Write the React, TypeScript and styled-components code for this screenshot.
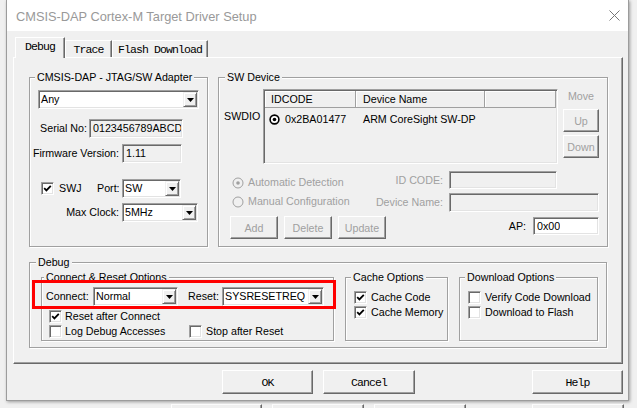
import React from 'react';
import styled, { createGlobalStyle } from 'styled-components';

const MONO = `"Liberation Mono", "DejaVu Sans Mono", monospace`;

const GlobalStyle = createGlobalStyle`
  html, body {
    margin: 0;
    padding: 0;
    background: #f0f0f0;
  }
  body {
    font-family: "Liberation Sans", Arial, sans-serif;
    font-size: 10.7px;
    color: #000;
  }
  * {
    box-sizing: border-box;
  }
`;

const Page = styled.div`
  width: 637px;
  height: 408px;
  overflow: hidden;
  background: #f0f0f0;
`;

const Dialog = styled.div`
  position: relative;
  z-index: 1;
  margin-left: 6px;
  width: 623px;
  height: 401px;
  border: 1px solid #9c9c9c;
  border-top: 0;
  background: #f0f0f0;
  box-shadow: 1px 1px 3px rgba(0, 0, 0, 0.35);
  display: flex;
  flex-direction: column;
`;

const TitleBar = styled.div`
  flex: none;
  height: 31px;
  background: #fff;
  display: flex;
  align-items: center;
  justify-content: space-between;
  padding: 0 8px 0 9px;
`;

const TitleText = styled.span`
  font-size: 12.8px;
  color: #999;
  padding-top: 1px;
`;

const TabStrip = styled.div`
  flex: none;
  height: 26px;
  display: flex;
  align-items: flex-end;
  padding-left: 8px;
  position: relative;
  z-index: 1;
`;

const Tab = styled.div<{ $active?: boolean; $w: number }>`
  width: ${p => p.$w}px;
  height: ${p => (p.$active ? 21 : 17)}px;
  margin-bottom: ${p => (p.$active ? -1 : 0)}px;
  padding-top: 3px;
  background: #f0f0f0;
  border-top: 1px solid #fff;
  border-left: 1px solid #fff;
  border-right: 1px solid #696969;
  box-shadow: inset -1px 0 0 #a0a0a0;
  font-family: ${MONO};
  font-size: 11.5px;
  letter-spacing: -0.9px;
  line-height: 12px;
  text-align: center;
`;

const Panel = styled.div`
  flex: none;
  margin-left: 6px;
  width: 610px;
  height: 307px;
  border: 1px solid;
  border-color: #fff #696969 #696969 #fff;
  box-shadow: inset -1px -1px 0 #a0a0a0;
  padding-left: 15px;
`;

const TopRow = styled.div`
  display: flex;
  gap: 10px;
  margin-top: 13px;
`;

const Group = styled.fieldset<{ $w: number; $h: number; $mt?: number }>`
  flex: none;
  margin: ${p => p.$mt ?? 0}px 0 0 0;
  padding: 0;
  min-width: 0;
  width: ${p => p.$w}px;
  height: ${p => p.$h}px;
  border: 1px solid #a0a0a0;
  box-shadow: inset 1px 1px 0 #fff, 1px 1px 0 #fff;
`;

const Legend = styled.legend<{ $indent?: number }>`
  margin-left: ${p => p.$indent ?? 5}px;
  padding: 0 2px;
  line-height: 13px;
  background: #f0f0f0;
  white-space: nowrap;
`;

const Row = styled.div<{ $mt?: number; $pl?: number; $gap?: number }>`
  display: flex;
  align-items: center;
  margin-top: ${p => p.$mt ?? 0}px;
  padding-left: ${p => p.$pl ?? 0}px;
  gap: ${p => p.$gap ?? 0}px;
`;

const Label = styled.span<{ $w?: number; $right?: boolean; $mr?: number; $ml?: number; $dim?: boolean }>`
  flex: none;
  width: ${p => (p.$w ? `${p.$w}px` : 'auto')};
  text-align: ${p => (p.$right ? 'right' : 'left')};
  margin-right: ${p => p.$mr ?? 0}px;
  margin-left: ${p => p.$ml ?? 0}px;
  color: ${p => (p.$dim ? '#a0a0a0' : '#000')};
  line-height: 13px;
  white-space: nowrap;
`;

const Sunken = styled.div<{ $w: number; $h?: number; $white?: boolean; $mr?: number }>`
  flex: none;
  width: ${p => p.$w}px;
  height: ${p => p.$h ?? 19}px;
  margin-right: ${p => p.$mr ?? 0}px;
  background: ${p => (p.$white ? '#fff' : '#f0f0f0')};
  border: 1px solid;
  border-color: #a0a0a0 #fff #fff #a0a0a0;
  box-shadow: inset 1px 1px 0 #696969, inset -1px -1px 0 #e3e3e3;
  padding: 1px;
  display: flex;
  align-items: center;
  overflow: hidden;
  white-space: nowrap;
`;

const FieldText = styled.span`
  padding-left: 2px;
  line-height: 13px;
  overflow: hidden;
`;

const ComboText = styled.span`
  flex: 1;
  padding-left: 1px;
  line-height: 13px;
  overflow: hidden;
`;

const ArrowButton = styled.span`
  flex: none;
  width: 14px;
  height: 100%;
  background: #f0f0f0;
  border: 1px solid;
  border-color: #f0f0f0 #696969 #696969 #f0f0f0;
  box-shadow: inset 1px 1px 0 #fff, inset -1px -1px 0 #a0a0a0;
  display: flex;
  align-items: center;
  justify-content: center;
`;

const Box = styled.span`
  flex: none;
  width: 13px;
  height: 13px;
  background: #fff;
  border: 1px solid;
  border-color: #a0a0a0 #fff #fff #a0a0a0;
  box-shadow: inset 1px 1px 0 #696969, inset -1px -1px 0 #e3e3e3;
  display: flex;
  align-items: center;
  justify-content: center;
`;

const Button = styled.button<{ $w: number; $h?: number; $mono?: boolean; $off?: boolean; $push?: boolean }>`
  flex: none;
  width: ${p => p.$w}px;
  height: ${p => p.$h ?? 23}px;
  margin: 0;
  margin-left: ${p => (p.$push ? 'auto' : '0')};
  padding: 0;
  background: #f0f0f0;
  border: 1px solid;
  border-color: #fff #696969 #696969 #fff;
  box-shadow: inset -1px -1px 0 #a0a0a0;
  font-family: ${p => (p.$mono ? MONO : `"Liberation Sans", Arial, sans-serif`)};
  font-size: ${p => (p.$mono ? '11.5px' : '10.7px')};
  letter-spacing: ${p => (p.$mono ? '-0.9px' : '0')};
  color: ${p => (p.$off ? '#a0a0a0' : '#000')};
`;

/* SW Device pieces */
const DeviceTop = styled.div`
  display: flex;
  align-items: flex-start;
  margin-top: 5px;
`;

const SideLabel = styled.span`
  flex: none;
  width: 44px;
  padding-left: 5px;
  margin-top: 21px;
  line-height: 13px;
`;

const ListView = styled.div`
  flex: none;
  width: 295px;
  height: 75px;
  border: 1px solid;
  border-color: #a0a0a0 #fff #fff #a0a0a0;
  box-shadow: inset 1px 1px 0 #696969, inset -1px -1px 0 #e3e3e3;
  padding: 1px;
  background: #f0f0f0;
`;

const ListHeader = styled.div`
  display: flex;
  height: 17px;
`;

const HeaderCell = styled.div<{ $w?: number; $pl?: number }>`
  flex: ${p => (p.$w ? 'none' : '1')};
  width: ${p => (p.$w ? `${p.$w}px` : 'auto')};
  padding-left: ${p => p.$pl ?? 5}px;
  border-right: 1px solid #a0a0a0;
  border-bottom: 1px solid #a0a0a0;
  box-shadow: inset 1px 1px 0 #fff;
  line-height: 16px;
  white-space: nowrap;
`;

const ListRow = styled.div`
  display: flex;
  align-items: center;
  height: 16px;
  margin-top: 3px;
`;

const ListCell = styled.div<{ $w?: number; $pl: number }>`
  flex: ${p => (p.$w ? 'none' : '1')};
  width: ${p => (p.$w ? `${p.$w}px` : 'auto')};
  padding-left: ${p => p.$pl}px;
  display: flex;
  align-items: center;
  gap: 5px;
  line-height: 13px;
  white-space: nowrap;
`;

const MoveColumn = styled.div`
  flex: none;
  width: 36px;
  margin-left: 5px;
  display: flex;
  flex-direction: column;
  align-items: center;
  padding-top: 1px;
`;

const MoveLabel = styled.span`
  color: #a0a0a0;
  line-height: 13px;
  margin-bottom: 6px;
`;

const MoveStack = styled.div`
  display: flex;
  flex-direction: column;
  gap: 3px;
`;

const DeviceBottom = styled.div`
  display: flex;
`;

const ModeColumn = styled.div`
  flex: none;
  width: 156px;
  margin-left: 11px;
  display: flex;
  flex-direction: column;
`;

const FieldColumn = styled.div`
  flex: 1;
  min-width: 0;
  display: flex;
  flex-direction: column;
  align-items: flex-end;
  padding-right: 8px;
`;

const RadioRow = styled.div<{ $mt: number }>`
  display: flex;
  align-items: center;
  gap: 4px;
  margin-top: ${p => p.$mt}px;
  padding-left: 2px;
  color: #a0a0a0;
  line-height: 13px;
  white-space: nowrap;
`;

/* Debug group pieces */
const SubGroups = styled.div`
  position: relative;
  display: flex;
  gap: 11px;
  margin-top: 2px;
  padding-left: 11px;
`;

const Highlight = styled.div`
  position: absolute;
  left: 2px;
  top: 9px;
  width: 304px;
  height: 29px;
  border: 3px solid #ff0000;
  pointer-events: none;
  z-index: 2;
`;

const CheckItem = styled.div<{ $w?: number; $gap?: number }>`
  flex: none;
  width: ${p => (p.$w ? `${p.$w}px` : 'auto')};
  display: flex;
  align-items: center;
  gap: ${p => p.$gap ?? 3}px;
  line-height: 13px;
  white-space: nowrap;
`;

const ButtonRow = styled.div`
  flex: none;
  display: flex;
  gap: 10px;
  margin-top: 6px;
  padding: 0 5px 0 215px;
`;

const BehindRow = styled.div`
  display: flex;
  gap: 10px;
  margin-top: 3px;
  padding-left: 171px;
`;

const BehindButton = styled.div<{ $w: number; $push?: number }>`
  flex: none;
  width: ${p => p.$w}px;
  height: 10px;
  margin-left: ${p => p.$push ?? 0}px;
  background: #f0f0f0;
  border: 1px solid;
  border-color: #fff #696969 transparent #fff;
  box-shadow: inset -1px 0 0 #a0a0a0;
`;

const DownArrow = () => (
  <svg width="7" height="4" viewBox="0 0 7 4">
    <polygon points="0,0 7,0 3.5,4" fill="#000" />
  </svg>
);

const Combo = ({ w, text, h }: { w: number; text: string; h?: number }) => (
  <Sunken $w={w} $h={h} $white>
    <ComboText>{text}</ComboText>
    <ArrowButton>
      <DownArrow />
    </ArrowButton>
  </Sunken>
);

const Field = ({ w, text, h, white, mr }: { w: number; text?: string; h?: number; white?: boolean; mr?: number }) => (
  <Sunken $w={w} $h={h} $white={white} $mr={mr}>
    {text && <FieldText>{text}</FieldText>}
  </Sunken>
);

const Check = ({ on }: { on?: boolean }) => (
  <Box>
    {on && (
      <svg width="9" height="9" viewBox="0 0 9 9">
        <path d="M1.2 4.2 L3.4 6.4 L7.8 1.8" fill="none" stroke="#000" strokeWidth="1.8" />
      </svg>
    )}
  </Box>
);

const CheckLabel = ({ on, text, w, gap }: { on?: boolean; text: string; w?: number; gap?: number }) => (
  <CheckItem $w={w} $gap={gap}>
    <Check on={on} />
    <span>{text}</span>
  </CheckItem>
);

const Radio = ({ on, dim }: { on?: boolean; dim?: boolean }) => {
  const c = dim ? '#a0a0a0' : '#000';
  return (
    <svg width={dim ? 12 : 11} height={dim ? 12 : 11} viewBox={dim ? '0 0 12 12' : '0 0 11 11'}>
      {dim ? (
        <circle cx="6" cy="6" r="5" fill="#f0f0f0" stroke="#a0a0a0" strokeWidth="1" />
      ) : (
        <circle cx="5.5" cy="5.5" r="4.4" fill="#fff" stroke={c} strokeWidth="1.6" />
      )}
      {on && <circle cx={dim ? 6 : 5.5} cy={dim ? 6 : 5.5} r="1.8" fill={c} />}
    </svg>
  );
};

const CloseIcon = () => (
  <svg width="11" height="11" viewBox="0 0 11 11">
    <path d="M0.5 0.5 L10.5 10.5 M10.5 0.5 L0.5 10.5" stroke="#777" strokeWidth="1" />
  </svg>
);

const App = () => {
  return (
    <Page>
      <GlobalStyle />
      <Dialog>
        <TitleBar>
          <TitleText>CMSIS-DAP Cortex-M Target Driver Setup</TitleText>
          <CloseIcon />
        </TitleBar>

        <TabStrip>
          <Tab $active $w={50}>Debug</Tab>
          <Tab $w={47}>Trace</Tab>
          <Tab $w={96}>Flash Download</Tab>
        </TabStrip>

        <Panel>
          <TopRow>
            <Group $w={179} $h={176}>
              <Legend $indent={5}>CMSIS-DAP - JTAG/SW Adapter</Legend>
              <Row $mt={6} $pl={8}>
                <Combo w={161} text="Any" />
              </Row>
              <Row $mt={10}>
                <Label $w={57} $right $mr={2}>Serial No:</Label>
                <Field w={94} text="0123456789ABCD" />
              </Row>
              <Row $mt={6}>
                <Label $w={89} $right $mr={3}>Firmware Version:</Label>
                <Field w={60} text="1.11" />
              </Row>
              <Row $mt={16} $pl={11}>
                <Check on />
                <Label $w={38} $ml={5}>SWJ</Label>
                <Label $w={22} $right $mr={3}>Port:</Label>
                <Combo w={59} text="SW" />
              </Row>
              <Row $mt={5}>
                <Label $w={89} $right $mr={3}>Max Clock:</Label>
                <Combo w={76} text="5MHz" />
              </Row>
            </Group>

            <Group $w={390} $h={176}>
              <Legend $indent={6}>SW Device</Legend>
              <DeviceTop>
                <SideLabel>SWDIO</SideLabel>
                <ListView>
                  <ListHeader>
                    <HeaderCell $w={91} $pl={6}>IDCODE</HeaderCell>
                    <HeaderCell $w={129} $pl={7}>Device Name</HeaderCell>
                    <HeaderCell />
                  </ListHeader>
                  <ListRow>
                    <ListCell $w={91} $pl={4}>
                      <Radio on />
                      <span>0x2BA01477</span>
                    </ListCell>
                    <ListCell $pl={7}>ARM CoreSight SW-DP</ListCell>
                  </ListRow>
                </ListView>
                <MoveColumn>
                  <MoveLabel>Move</MoveLabel>
                  <MoveStack>
                    <Button $w={36} $off>Up</Button>
                    <Button $w={36} $off>Down</Button>
                  </MoveStack>
                </MoveColumn>
              </DeviceTop>

              <DeviceBottom>
                <ModeColumn>
                  <RadioRow $mt={12}>
                    <Radio on dim />
                    <span>Automatic Detection</span>
                  </RadioRow>
                  <RadioRow $mt={6}>
                    <Radio dim />
                    <span>Manual Configuration</span>
                  </RadioRow>
                  <Row $mt={8} $gap={6}>
                    <Button $w={48} $off>Add</Button>
                    <Button $w={48} $off>Delete</Button>
                    <Button $w={48} $off>Update</Button>
                  </Row>
                </ModeColumn>
                <FieldColumn>
                  <Row $mt={7}>
                    <Label $dim $mr={6}>ID CODE:</Label>
                    <Field w={108} h={18} mr={42} />
                  </Row>
                  <Row $mt={4}>
                    <Label $dim $mr={6}>Device Name:</Label>
                    <Field w={150} h={19} />
                  </Row>
                  <Row $mt={5}>
                    <Label $mr={7}>AP:</Label>
                    <Field w={66} h={18} white text="0x00" />
                  </Row>
                </FieldColumn>
              </DeviceBottom>
            </Group>
          </TopRow>

          <Group $w={578} $h={92} $mt={9}>
            <Legend $indent={6}>Debug</Legend>
            <SubGroups>
              <Group $w={293} $h={70}>
                <Legend $indent={2}>Connect &amp; Reset Options</Legend>
                <Row $mt={3} $pl={4}>
                  <Label $w={44} $mr={3}>Connect:</Label>
                  <Combo w={85} text="Normal" />
                  <Label $w={41} $right $mr={3}>Reset:</Label>
                  <Combo w={102} text="SYSRESETREQ" />
                </Row>
                <Row $mt={4} $pl={7}>
                  <CheckLabel on text="Reset after Connect" />
                </Row>
                <Row $mt={2} $pl={7}>
                  <CheckLabel text="Log Debug Accesses" w={140} />
                  <CheckLabel text="Stop after Reset" gap={4} />
                </Row>
              </Group>

              <Group $w={103} $h={70}>
                <Legend $indent={5}>Cache Options</Legend>
                <Row $mt={7} $pl={8}>
                  <CheckLabel on text="Cache Code" gap={4} />
                </Row>
                <Row $mt={2} $pl={8}>
                  <CheckLabel on text="Cache Memory" gap={4} />
                </Row>
              </Group>

              <Group $w={139} $h={70}>
                <Legend $indent={5}>Download Options</Legend>
                <Row $mt={7} $pl={8}>
                  <CheckLabel text="Verify Code Download" gap={4} />
                </Row>
                <Row $mt={2} $pl={8}>
                  <CheckLabel text="Download to Flash" gap={4} />
                </Row>
              </Group>

              <Highlight />
            </SubGroups>
          </Group>
        </Panel>

        <ButtonRow>
          <Button $w={91} $h={24} $mono>OK</Button>
          <Button $w={92} $h={24} $mono>Cancel</Button>
          <Button $w={91} $h={24} $mono $push>Help</Button>
        </ButtonRow>
      </Dialog>

      <BehindRow>
        <BehindButton $w={91} />
        <BehindButton $w={92} />
        <BehindButton $w={92} />
        <BehindButton $w={92} $push={56} />
      </BehindRow>
    </Page>
  );
};

export default App;
